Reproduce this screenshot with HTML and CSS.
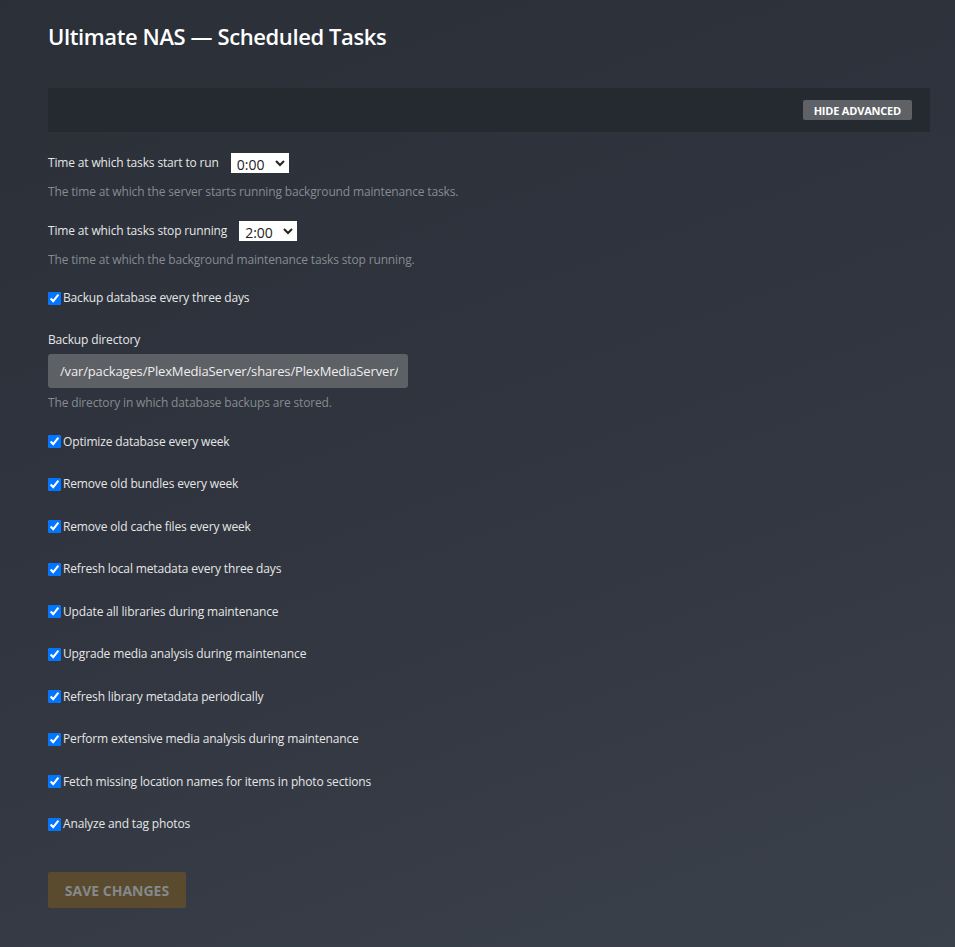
FILE: index.html
```html
<!DOCTYPE html>
<html lang="en">
<head>
    <meta charset="UTF-8">
    <title>Ultimate NAS — Scheduled Tasks</title>
    <link rel="stylesheet" href="styles.css">
</head>
<body>
    <h1 class="page-title">Ultimate NAS — Scheduled Tasks</h1>

    <!-- Bar with the advanced toggle -->
    <div class="toolbar">
        <button class="btn-advanced" type="button">Hide Advanced</button>
    </div>

    <form class="settings">
        <div class="group group-help">
            <label class="inline-label">Time at which tasks start to run
                <select class="time-select">
                    <option>0:00</option>
                    <option>1:00</option>
                    <option>2:00</option>
                </select>
            </label>
            <p class="help">The time at which the server starts running background maintenance tasks.</p>
        </div>

        <div class="group group-help">
            <label class="inline-label">Time at which tasks stop running
                <select class="time-select">
                    <option>0:00</option>
                    <option>1:00</option>
                    <option selected>2:00</option>
                </select>
            </label>
            <p class="help">The time at which the background maintenance tasks stop running.</p>
        </div>

        <div class="group check-group check-before-dir">
            <label class="check"><input type="checkbox" checked> Backup database every three days</label>
        </div>

        <div class="group group-help">
            <label class="field-label" for="backup-dir">Backup directory</label>
            <input class="text-input" id="backup-dir" type="text" value="/var/packages/PlexMediaServer/shares/PlexMediaServer/AppData/Plex Media Server/Plug-in Support/Databases">
            <p class="help help-tight">The directory in which database backups are stored.</p>
        </div>

        <div class="group check-group"><label class="check"><input type="checkbox" checked> Optimize database every week</label></div>
        <div class="group check-group"><label class="check"><input type="checkbox" checked> Remove old bundles every week</label></div>
        <div class="group check-group"><label class="check"><input type="checkbox" checked> Remove old cache files every week</label></div>
        <div class="group check-group"><label class="check"><input type="checkbox" checked> Refresh local metadata every three days</label></div>
        <div class="group check-group"><label class="check"><input type="checkbox" checked> Update all libraries during maintenance</label></div>
        <div class="group check-group"><label class="check"><input type="checkbox" checked> Upgrade media analysis during maintenance</label></div>
        <div class="group check-group"><label class="check"><input type="checkbox" checked> Refresh library metadata periodically</label></div>
        <div class="group check-group"><label class="check"><input type="checkbox" checked> Perform extensive media analysis during maintenance</label></div>
        <div class="group check-group"><label class="check"><input type="checkbox" checked> Fetch missing location names for items in photo sections</label></div>
        <div class="group check-group last"><label class="check"><input type="checkbox" checked> Analyze and tag photos</label></div>

        <button class="btn-save" type="submit" disabled>Save Changes</button>
    </form>
</body>
</html>
```

FILE: styles.css
```css
html {
    min-height: 100%;
    background: linear-gradient(160deg, #2a2f38 0%, #30353f 50%, #3b414b 100%);
}

body {
    margin: 0;
    padding: 21px 25px 30px 48px;
    font-family: 'Open Sans', sans-serif;
    font-size: 12px;
    letter-spacing: -0.15px;
    color: #e6e6e6;
    min-height: 947px;
    box-sizing: border-box;
}

.page-title {
    margin: 0;
    font-size: 22px;
    line-height: 30px;
    font-weight: 600;
    letter-spacing: -0.4px;
    color: #fff;
}

.toolbar {
    margin-top: 37px;
    height: 44px;
    background: #252a31;
    display: flex;
    align-items: center;
    justify-content: flex-end;
    padding-right: 18px;
}

.btn-advanced {
    height: 20px;
    padding: 0 11px;
    border: none;
    border-radius: 2px;
    background: #5e6166;
    color: #fff;
    font-family: 'Open Sans', sans-serif;
    font-size: 11px;
    font-weight: 700;
    letter-spacing: -0.2px;
    text-transform: uppercase;
}

.settings {
    margin-top: 21px;
}

.group {
    margin-bottom: 22.5px;
}

.group-help {
    margin-bottom: 19.5px;
}

.check-before-dir {
    margin-bottom: 22px;
}

.inline-label {
    display: flex;
    align-items: center;
    gap: 12px;
    height: 20px;
    line-height: 20px;
}

.time-select {
    width: 58px;
    height: 20px;
    padding: 0 1px;
    border: 1px solid #fff;
    border-radius: 0;
    background: #fff;
    color: #222;
    font-family: 'Open Sans', sans-serif;
    font-size: 14px;
}

.help {
    margin: 10px 0 0;
    line-height: 18px;
    color: #878b91;
}

.help-tight {
    margin-top: 6px;
}

.field-label {
    display: block;
    line-height: 20px;
}

.text-input {
    display: block;
    box-sizing: border-box;
    width: 360px;
    height: 34px;
    margin-top: 4px;
    padding: 0 10px 0 12px;
    border: none;
    border-radius: 3px;
    background: #5d6065;
    color: #eee;
    font-family: 'Open Sans', sans-serif;
    font-size: 13px;
    letter-spacing: -0.15px;
}

.check {
    display: flex;
    align-items: center;
    height: 20px;
    line-height: 20px;
}

.check input {
    width: 13px;
    height: 13px;
    margin: 0 2px 0 0;
    accent-color: #0075ff;
}

.last {
    margin-bottom: 38px;
}

.btn-save {
    width: 138px;
    height: 36px;
    border: none;
    border-radius: 2px;
    background: #5a4a2e;
    color: #85888c;
    font-family: 'Open Sans', sans-serif;
    font-size: 14px;
    font-weight: 700;
    text-transform: uppercase;
}
```
